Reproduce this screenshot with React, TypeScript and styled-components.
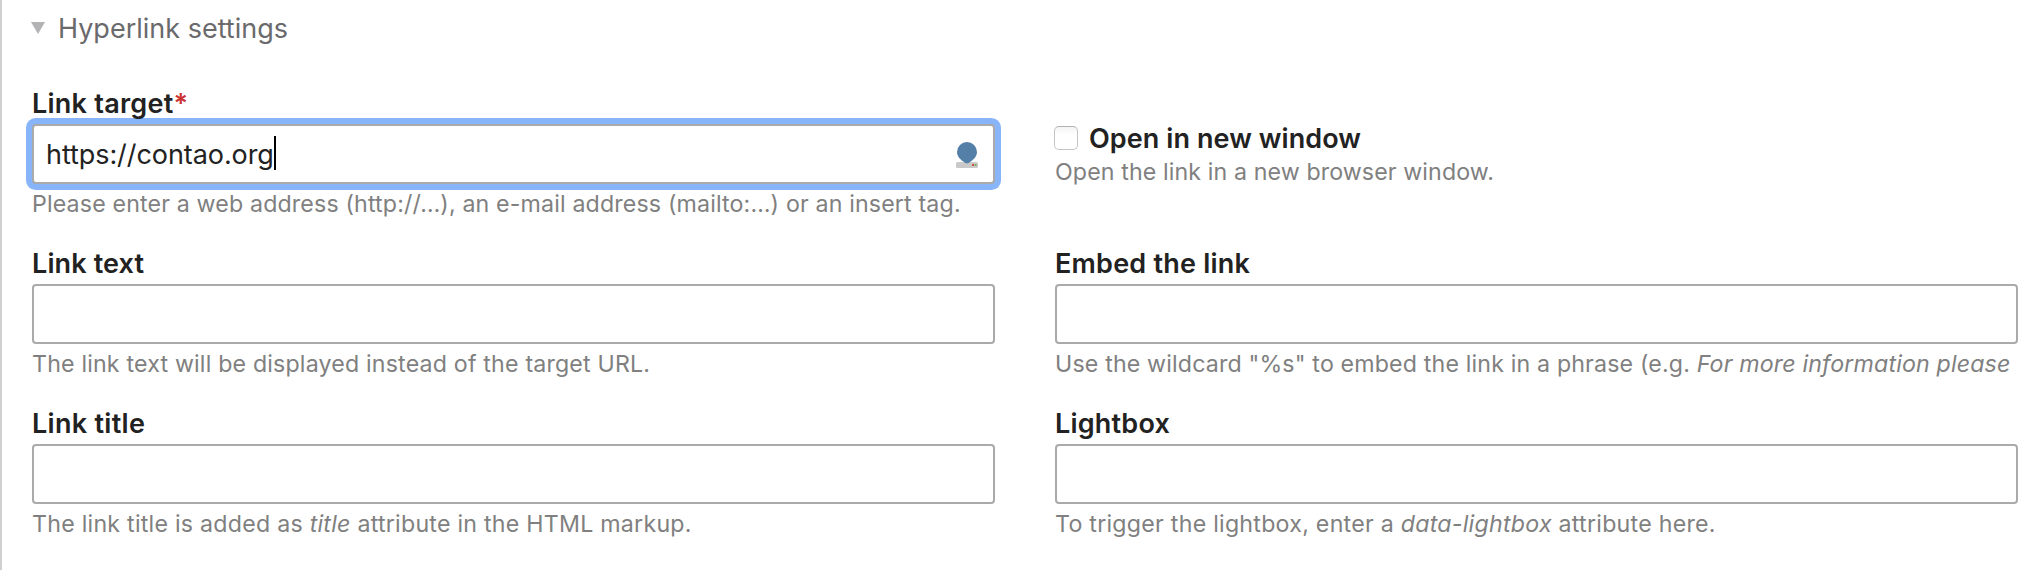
import React from "react";
import styled, { createGlobalStyle } from "styled-components";

const GlobalStyle = createGlobalStyle`
  *, *::before, *::after { box-sizing: border-box; }
  body {
    margin: 0;
    background: #fff;
    color: #222;
    font-family: Inter, "Liberation Sans", sans-serif;
  }
`;

const Panel = styled.section`
  height: 570px;
  padding: 12px 26px 0 30px;
  border-left: 2px solid #d0d0d0;
  overflow: hidden;
`;

const Legend = styled.header`
  display: flex;
  align-items: center;
  gap: 13px;
  height: 33px;
  margin: 0 0 42px -1px;
  color: #6a6a6c;
  font-size: 27px;
  line-height: 33px;
`;

const Arrow = styled.svg`
  display: block;
  width: 14px;
  height: 12px;
  margin-bottom: 1px;
  fill: #b3b3b5;
`;

const Fields = styled.div`
  display: grid;
  grid-template-columns: 963px 963px;
  column-gap: 60px;
  row-gap: 29px;
`;

const Field = styled.div<{ $offset?: boolean }>`
  min-width: 0;
  padding-top: ${(p) => (p.$offset ? "35px" : "0")};
`;

const Label = styled.label<{ $spacing?: number }>`
  display: block;
  height: 33px;
  font-size: 27px;
  font-weight: 600;
  line-height: 33px;
  letter-spacing: ${(p) => p.$spacing ?? 0.1}px;
  white-space: nowrap;
`;

const Required = styled.span`
  color: #cc3333;
`;

const Control = styled.div<{ $focused?: boolean }>`
  display: flex;
  align-items: center;
  height: 60px;
  margin-top: 4px;
  padding: 0 16px 0 12px;
  border: 2px solid #aaa;
  border-radius: 4px;
  background: #fff;
  box-shadow: ${(p) => (p.$focused ? "0 0 0 6px #88b4f9" : "none")};
`;

const Value = styled.span`
  font-size: 27px;
  line-height: 33px;
  letter-spacing: -0.07px;
`;

const Caret = styled.span`
  width: 2px;
  height: 34px;
  margin-top: -2px;
  background: #000;
`;

const PickerIcon = styled.svg`
  display: block;
  width: 22px;
  height: 26px;
  margin: 2px -1px 0 auto;
`;

const Hint = styled.p<{ $top?: number; $spacing?: number }>`
  height: 28px;
  margin: ${(p) => p.$top ?? 6}px 0 0;
  color: #808080;
  font-size: 23.2px;
  line-height: 28px;
  letter-spacing: ${(p) => p.$spacing ?? 0.16}px;
  white-space: nowrap;
`;

const CheckRow = styled.div`
  display: flex;
  align-items: center;
  gap: 11px;
  height: 33px;
  margin-left: -1px;
`;

const Checkbox = styled.span`
  width: 24px;
  height: 24px;
  margin-bottom: 1px;
  border: 1px solid #c4c4c4;
  border-top-color: #b4b4b4;
  border-radius: 5px;
  background: linear-gradient(#f3f3f3, #fff 35%);
`;

export default function App() {
  return (
    <>
      <GlobalStyle />
      <Panel>
        <Legend>
          <Arrow viewBox="0 0 14 12">
            <path d="M0 0h14L7 12z" />
          </Arrow>
          Hyperlink settings
        </Legend>
        <Fields>
          <Field>
            <Label $spacing={0.25}>
              Link target<Required>*</Required>
            </Label>
            <Control $focused>
              <Value>https://contao.org</Value>
              <Caret />
              <PickerIcon viewBox="0 0 22 26">
                <rect x="0" y="20" width="22" height="6" rx="1.5" fill="#c9c9c9" />
                <rect x="16" y="22" width="2" height="2" fill="#d0524a" />
                <rect x="18.6" y="22" width="2" height="2" fill="#7cb45a" />
                <path
                  d="M11 0a10 10 0 0 1 10 10c0 4.500-3.500 7.500-6.200 9.600C13.200 20.900 12 21.400 11 21.400s-2.200-.5-3.800-1.800C4.500 17.500 1 14.500 1 10A10 10 0 0 1 11 0z"
                  fill="#5480a8"
                />
              </PickerIcon>
            </Control>
            <Hint $spacing={0.15}>
              Please enter a web address (http://…), an e-mail address (mailto:…) or an insert tag.
            </Hint>
          </Field>
          <Field $offset>
            <CheckRow>
              <Checkbox role="checkbox" aria-checked="false" />
              <Label $spacing={0.08}>Open in new window</Label>
            </CheckRow>
            <Hint $top={3} $spacing={0.11}>
              Open the link in a new browser window.
            </Hint>
          </Field>
          <Field>
            <Label $spacing={0.12}>Link text</Label>
            <Control />
            <Hint $spacing={0.175}>The link text will be displayed instead of the target URL.</Hint>
          </Field>
          <Field>
            <Label $spacing={0.22}>Embed the link</Label>
            <Control />
            <Hint $spacing={0.155}>
              Use the wildcard "%s" to embed the link in a phrase (e.g.{" "}
              <em>For more information please</em>
            </Hint>
          </Field>
          <Field>
            <Label $spacing={0.3}>Link title</Label>
            <Control />
            <Hint $spacing={0.24}>
              The link title is added as <em>title</em> attribute in the HTML markup.
            </Hint>
          </Field>
          <Field>
            <Label $spacing={0.2}>Lightbox</Label>
            <Control />
            <Hint $spacing={0.25}>
              To trigger the lightbox, enter a <em>data-lightbox</em> attribute here.
            </Hint>
          </Field>
        </Fields>
      </Panel>
    </>
  );
}
